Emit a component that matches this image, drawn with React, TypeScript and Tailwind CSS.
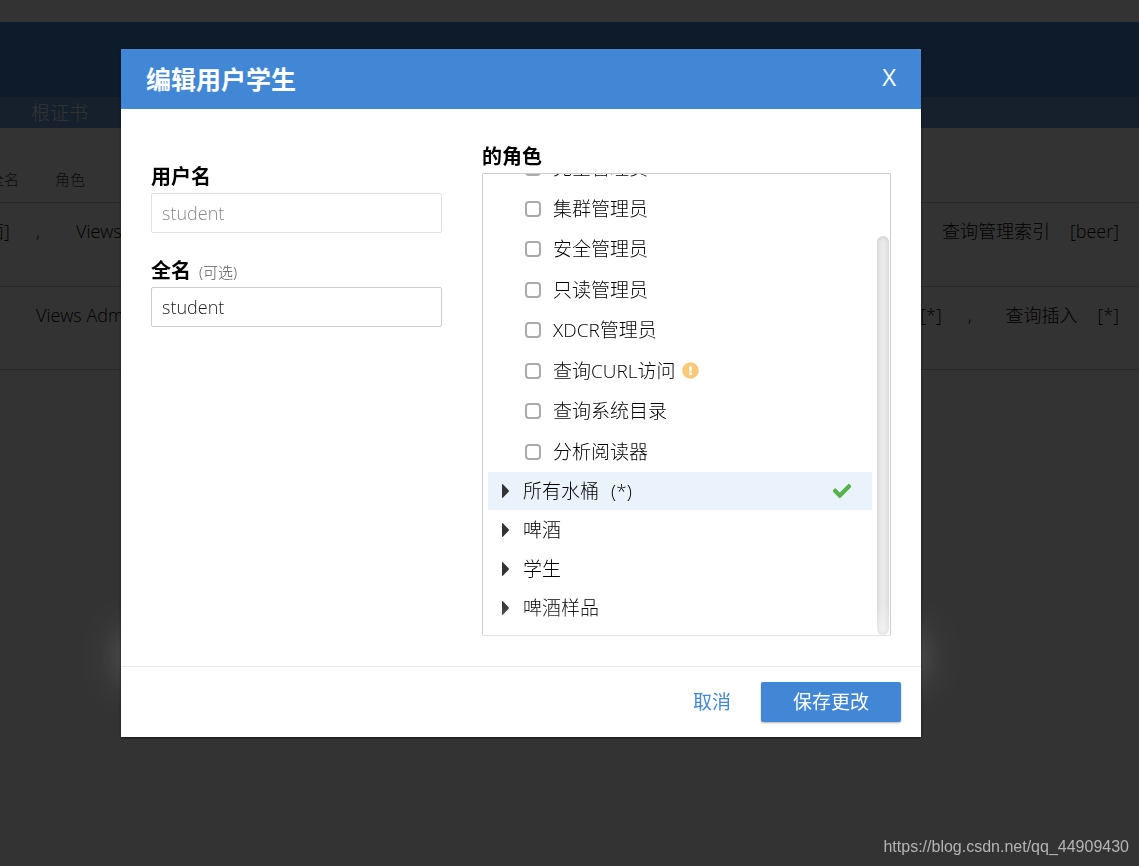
import { useState } from 'react';
import { FaCheck, FaExclamationCircle } from 'react-icons/fa';

const roles = [
  { id: 'admin', name: '完全管理员' },
  { id: 'cluster_admin', name: '集群管理员' },
  { id: 'security_admin', name: '安全管理员' },
  { id: 'ro_admin', name: '只读管理员' },
  { id: 'replication_admin', name: 'XDCR管理员' },
  { id: 'query_external_access', name: '查询CURL访问', warning: true },
  { id: 'query_system_catalog', name: '查询系统目录' },
  { id: 'analytics_reader', name: '分析阅读器' },
];

const buckets = [
  { id: 'all', name: '所有水桶', suffix: '(*)', granted: true },
  { id: 'beer', name: '啤酒' },
  { id: 'student', name: '学生' },
  { id: 'beer-sample', name: '啤酒样品' },
];

function UsersPage() {
  return (
    <div className="min-h-screen overflow-hidden bg-white pt-[22px]">
      <header>
        <div className="h-[75px] bg-[#4287d6]" />
        <nav className="flex h-[31px] items-center bg-[#69a0dc] px-[31px]">
          <a href="#cert" className="text-[19px] leading-[28px] text-white">根证书</a>
        </nav>
      </header>
      <table className="-ml-[14px] mt-[29px] w-[calc(100%+14px)] border-collapse text-left text-lg whitespace-nowrap text-black">
        <thead>
          <tr className="h-[45px] border-b border-[#c8c8c8] text-[15px] text-[#444]">
            <th className="w-[69px] pl-[3px] font-light">全名</th>
            <th className="font-light" colSpan={2}>角色</th>
          </tr>
        </thead>
        <tbody>
          <tr className="h-[84px] border-b border-[#c8c8c8] align-top">
            <td className="pt-[14px]" colSpan={2}>
              <div className="flex">
                <span className="w-[50px]">面]</span>
                <span className="w-10">,</span>
                <span>Views Admin</span>
              </div>
            </td>
            <td className="pt-[14px] pr-5">
              <div className="flex justify-end gap-5">
                <span>查询管理索引</span>
                <span>[beer]</span>
              </div>
            </td>
          </tr>
          <tr className="h-[83px] border-b border-[#c8c8c8] align-top">
            <td className="pt-[14px] pl-[50px]" colSpan={2}>Views Admin</td>
            <td className="pt-[14px] pr-5">
              <div className="flex justify-end gap-5">
                <span>[*]</span>
                <span className="pr-[14px] pl-[6px]">,</span>
                <span>查询插入</span>
                <span>[*]</span>
              </div>
            </td>
          </tr>
        </tbody>
      </table>
    </div>
  );
}

function RoleList() {
  const [checked, setChecked] = useState<string[]>([]);

  const toggle = (id: string) => {
    setChecked((prev) => (prev.includes(id) ? prev.filter((r) => r !== id) : [...prev, id]));
  };

  return (
    <div className="relative flex h-[463px] gap-[5px] overflow-hidden rounded-[2px] border border-[#ccc] border-b-[#e2e2e2] pr-px pl-[5px]">
      <div className="flex flex-1 flex-col justify-end pb-2">
        <div className="flex h-[324px] shrink-0 flex-col pl-[37px]">
          {roles.map((role) => (
            <label key={role.id} className="flex flex-1 items-center">
              <input
                type="checkbox"
                checked={checked.includes(role.id)}
                onChange={() => toggle(role.id)}
                className="mr-3 size-4 appearance-none rounded-[4px] border-2 border-[#aaa] bg-white checked:bg-[#4287d6]"
              />
              <span>{role.name}</span>
              {role.warning && <FaExclamationCircle className="ml-[6px] size-[17px] text-[#f9c978]" />}
            </label>
          ))}
        </div>
        <div className="flex flex-col gap-px">
          {buckets.map((bucket) => (
            <button
              key={bucket.id}
              type="button"
              aria-expanded={false}
              className={`flex h-[38px] items-center pr-[21px] pl-[14px] text-left ${bucket.granted ? 'bg-[#eaf2fb]' : ''}`}
            >
              <svg viewBox="0 0 8 14" preserveAspectRatio="none" className="mr-[14px] h-[14px] w-[7px] fill-[#333]">
                <path d="M0 .6C0 .1.6-.1 1 .3L7.600 6.300C8 6.700 8 7.300 7.600 7.700L1 13.700C.6 14.100 0 13.900 0 13.400Z" />
              </svg>
              <span>{bucket.name}</span>
              {bucket.suffix && <span className="ml-3">{bucket.suffix}</span>}
              {bucket.granted && <FaCheck className="ml-auto size-[18px] stroke-[#55b149] stroke-[24] text-[#55b149]" />}
            </button>
          ))}
        </div>
      </div>
      <div className="flex w-3 flex-col pt-[62px]">
        <div className="flex-1 rounded-full bg-[#e9e9e9] shadow-[inset_0_0_5px_rgba(0,0,0,0.15)]" />
      </div>
      <div className="pointer-events-none absolute inset-x-0 bottom-0 h-8 bg-linear-to-b from-transparent to-white/40" />
    </div>
  );
}

function EditUserDialog() {
  const [fullName, setFullName] = useState('student');

  return (
    <div className="relative w-full max-w-[800px]">
      {/* glow behind the lower part of the dialog */}
      <div className="absolute inset-x-[2px] bottom-[60px] h-10 rounded-full shadow-[0_0_40px_rgba(255,255,255,0.35)]" />
      <form
        role="dialog"
        aria-labelledby="dialog-title"
        onSubmit={(e) => e.preventDefault()}
        className="relative overflow-hidden rounded-t-[2px] bg-white text-[19px] leading-[28px] shadow-[0_1px_3px_rgba(0,0,0,0.6)]"
      >
        <div className="flex h-[60px] items-center justify-between bg-[#4287d6] px-[25px] text-white">
          <h2 id="dialog-title" className="text-[25px] font-bold">编辑用户学生</h2>
          <button type="button" aria-label="X" className="pb-1 text-2xl font-normal">X</button>
        </div>

        <div className="grid grid-cols-[291fr_409fr] gap-10 px-[30px] pt-[34px] pb-[30px]">
          <div className="flex flex-col gap-6 pt-5">
            <div>
              <label htmlFor="username" className="mb-[2px] flex h-7 items-baseline text-xl leading-[28px] font-bold">
                用户名
              </label>
              <input
                id="username"
                disabled
                value="student"
                className="block h-10 w-full rounded-[2px] border border-[#e2e2e2] bg-white px-[10px] text-lg text-[#888]"
              />
            </div>
            <div>
              <label htmlFor="fullname" className="mb-[2px] flex h-7 items-baseline text-xl leading-[28px] font-bold">
                全名
                <span className="ml-2 text-[15px] font-light text-[#555]">(可选)</span>
              </label>
              <input
                id="fullname"
                value={fullName}
                onChange={(e) => setFullName(e.target.value)}
                className="block h-10 w-full rounded-[2px] border border-[#ccc] bg-white px-[10px] text-lg text-[#222]"
              />
            </div>
          </div>

          <div>
            <h3 className="mb-[2px] text-xl leading-[28px] font-bold">的角色</h3>
            <RoleList />
          </div>
        </div>

        <div className="flex items-center justify-end gap-[30px] border-t border-[#e9e9e9] px-5 py-[15px]">
          <a href="#cancel" className="font-normal text-[#4287d6]">取消</a>
          <button
            type="submit"
            className="h-10 w-[140px] rounded-[2px] bg-[#4287d6] font-normal text-white shadow-[0_1px_2px_rgba(0,0,0,0.3)]"
          >
            保存更改
          </button>
        </div>
      </form>
    </div>
  );
}

export default function App() {
  return (
    <div className="font-['Open_Sans','Noto_Sans_CJK_SC',sans-serif] font-light text-black">
      <UsersPage />
      <div className="fixed inset-0 overflow-y-auto bg-black/80 pt-[49px] pr-[218px] pl-[121px]">
        <EditUserDialog />
      </div>
      <p className="fixed right-[10px] bottom-[7px] font-['Liberation_Sans',sans-serif] text-base font-normal text-[#b4b4b4]">
        https://blog.csdn.net/qq_44909430
      </p>
    </div>
  );
}
